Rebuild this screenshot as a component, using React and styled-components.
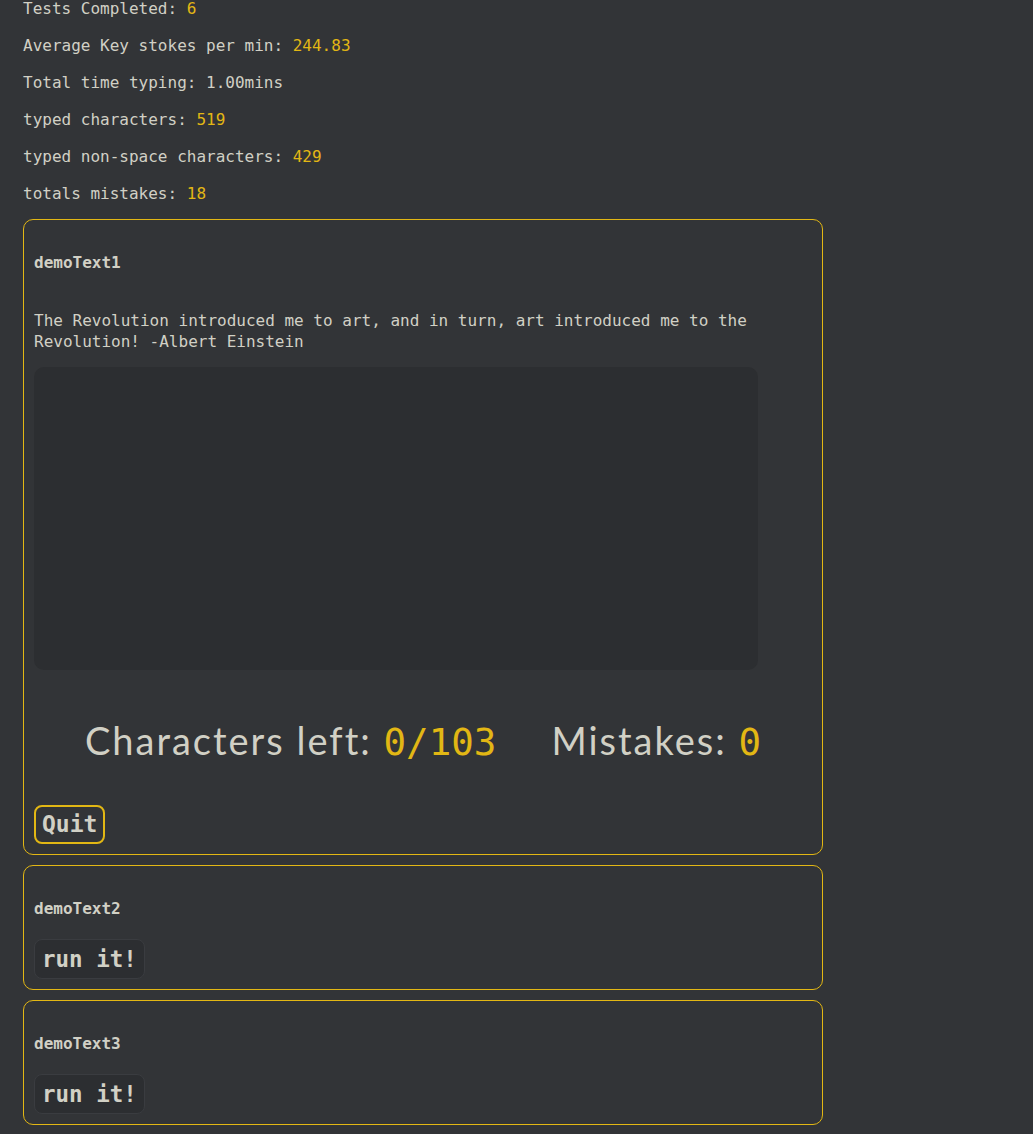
import React from 'react';
import styled, { createGlobalStyle } from 'styled-components';

const GlobalStyle = createGlobalStyle`
    html, body {
        margin: 0;
        padding: 0;
        background-color: #323437;
    }
    body {
        font-family: "DejaVu Sans Mono", "Liberation Mono", monospace;
        color: #d1d0c5;
    }
`;

const stats = [
    { label: 'Tests Completed: ', value: '6' },
    { label: 'Average Key stokes per min: ', value: '244.83' },
    { label: 'Total time typing: ', plain: '1.00mins' },
    { label: 'typed characters: ', value: '519' },
    { label: 'typed non-space characters: ', value: '429' },
    { label: 'totals mistakes: ', value: '18' },
];

function App() {
    return (
        <>
            <GlobalStyle />
            <Page>
                <StatList>
                    {stats.map((s) => (
                        <Stat key={s.label}>
                            {s.label}
                            {s.plain}
                            {s.value && <Value>{s.value}</Value>}
                        </Stat>
                    ))}
                </StatList>
                <Cards>
                    <Card>
                        <Title>demoText1</Title>
                        <Quote>
                            The Revolution introduced me to art, and in turn, art
                            introduced me to the Revolution! -Albert Einstein
                        </Quote>
                        <TypingArea />
                        <Counter>
                            <span>
                                Characters left: <Digits>0/103</Digits>
                            </span>
                            <span>
                                Mistakes: <Digits>0</Digits>
                            </span>
                        </Counter>
                        <QuitButton>Quit</QuitButton>
                    </Card>
                    <Card>
                        <Title>demoText2</Title>
                        <RunButton>run it!</RunButton>
                    </Card>
                    <Card>
                        <Title>demoText3</Title>
                        <RunButton>run it!</RunButton>
                    </Card>
                </Cards>
            </Page>
        </>
    );
}

const Page = styled.div`
    padding: 0 0 8px 23px;
`;

const StatList = styled.div`
    display: flex;
    flex-direction: column;
    gap: 19px;
    margin-bottom: 16px;
`;

const Stat = styled.p`
    margin: 0;
    font-size: 16px;
    line-height: 18px;
    white-space: pre;
`;

const Value = styled.span`
    color: #e2b714;
`;

const Cards = styled.div`
    display: flex;
    flex-direction: column;
    gap: 10px;
    width: 800px;
`;

const Card = styled.div`
    box-sizing: border-box;
    width: 800px;
    border: 1px solid #e2b714;
    border-radius: 10px;
    padding: 33px 10px 10px;
    display: flex;
    flex-direction: column;
    align-items: flex-start;
`;

const Title = styled.h4`
    margin: 0;
    font-size: 16px;
    line-height: 20px;
    font-weight: bold;
`;

const Quote = styled.p`
    margin: 37px 0 0;
    font-size: 16px;
    line-height: 21px;
    max-width: 740px;
`;

const TypingArea = styled.div`
    margin-top: 15px;
    width: 724px;
    height: 303px;
    background-color: #2c2e31;
    border-radius: 10px;
`;

const Counter = styled.div`
    align-self: stretch;
    margin-top: 46px;
    display: flex;
    justify-content: center;
    gap: 55px;
    font-family: "Lato", "Noto Sans", sans-serif;
    font-size: 38px;
    line-height: 48px;
    letter-spacing: 2px;
`;

const Digits = styled.span`
    font-family: "DejaVu Sans Mono", monospace;
    font-size: 37.5px;
    letter-spacing: 0;
    color: #e2b714;
`;

const QuitButton = styled.button`
    margin-top: 39px;
    box-sizing: border-box;
    height: 39px;
    padding: 0 6px;
    border: 2px solid #e2b714;
    border-radius: 8px;
    background: transparent;
    color: #d1d0c5;
    font-family: "DejaVu Sans Mono", monospace;
    font-weight: bold;
    font-size: 23px;
    line-height: 1;
`;

const RunButton = styled.button`
    margin-top: 20px;
    box-sizing: border-box;
    height: 40px;
    padding: 0 7px;
    border: 1px solid #3a3c40;
    border-radius: 8px;
    background-color: #2c2e31;
    color: #d1d0c5;
    font-family: "DejaVu Sans Mono", monospace;
    font-weight: bold;
    font-size: 22.5px;
    line-height: 1;
`;

export default App;
